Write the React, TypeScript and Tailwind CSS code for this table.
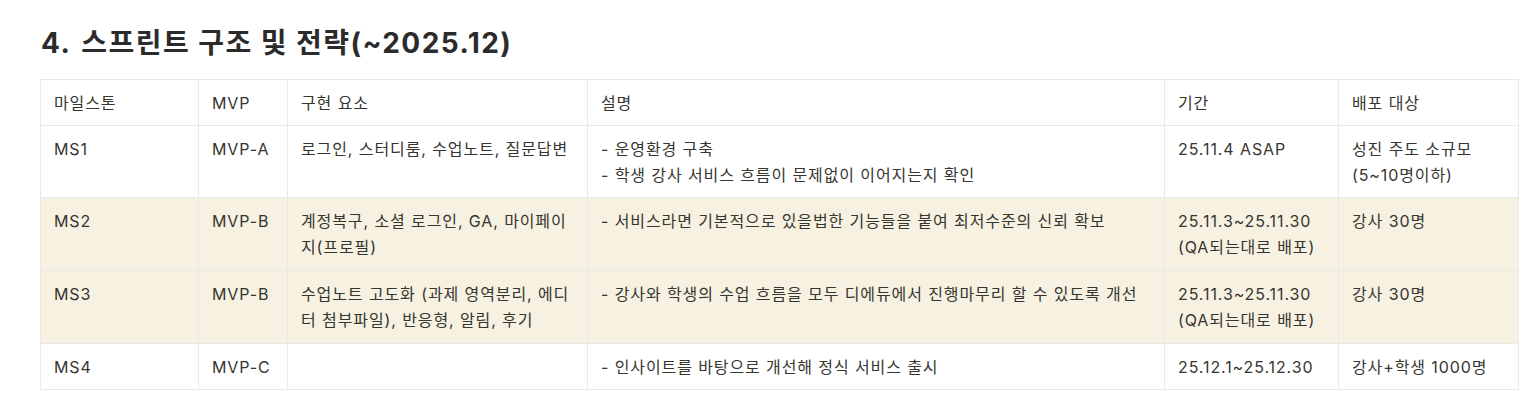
const ROWS = [
  {
    ms: "MS1",
    mvp: "MVP-A",
    items: "로그인, 스터디룸, 수업노트, 질문답변",
    desc: ["- 운영환경 구축", "- 학생 강사 서비스 흐름이 문제없이 이어지는지 확인"],
    period: ["25.11.4 ASAP"],
    target: ["성진 주도 소규모", "(5~10명이하)"],
    tint: false,
  },
  {
    ms: "MS2",
    mvp: "MVP-B",
    items: "계정복구, 소셜 로그인, GA, 마이페이지(프로필)",
    desc: ["- 서비스라면 기본적으로 있을법한 기능들을 붙여 최저수준의 신뢰 확보"],
    period: ["25.11.3~25.11.30", "(QA되는대로 배포)"],
    target: ["강사 30명"],
    tint: true,
  },
  {
    ms: "MS3",
    mvp: "MVP-B",
    items: "수업노트 고도화 (과제 영역분리, 에디터 첨부파일), 반응형, 알림, 후기",
    desc: ["- 강사와 학생의 수업 흐름을 모두 디에듀에서 진행마무리 할 수 있도록 개선"],
    period: ["25.11.3~25.11.30", "(QA되는대로 배포)"],
    target: ["강사 30명"],
    tint: true,
  },
  {
    ms: "MS4",
    mvp: "MVP-C",
    items: "",
    desc: ["- 인사이트를 바탕으로 개선해 정식 서비스 출시"],
    period: ["25.12.1~25.12.30"],
    target: ["강사+학생 1000명"],
    tint: false,
  },
];

const HEADERS = ["마일스톤", "MVP", "구현 요소", "설명", "기간", "배포 대상"];
const WIDTHS = ["w-[158px]", "w-[89px]", "w-[300px]", "w-[577px]", "w-[174px]", "w-[180px]"];

function Lines({ lines }: { lines: string[] }) {
  return (
    <>
      {lines.map((l) => (
        <div key={l}>{l}</div>
      ))}
    </>
  );
}

export default function App() {
  const base = "border border-[#e9e9e7] px-[13px] pt-[10px] align-top";

  return (
    <div
      className="min-h-[412px] bg-white pl-[40px] pt-[24px] text-[#37352f]"
      style={{ fontFamily: 'Inter, "Noto Sans CJK KR", sans-serif' }}
    >
      {/* title */}
      <h2 className="pl-[1px] text-[28px] font-bold leading-[38px] tracking-[1.45px] text-[#2b2b2b]">
        4.<span className="ml-[10px]">스프린트 구조 및 전략(~2025.12)</span>
      </h2>

      {/* table */}
      <table className="mt-[17px] table-fixed border-collapse text-[16px] leading-[26px] tracking-[0.9px]">
        <colgroup>
          {WIDTHS.map((w) => (
            <col key={w} className={w} />
          ))}
        </colgroup>
        <thead>
          <tr>
            {HEADERS.map((h) => (
              <th key={h} className={`${base} pb-[9px] text-left font-normal`}>
                {h}
              </th>
            ))}
          </tr>
        </thead>
        <tbody>
          {ROWS.map((r) => {
            const cell = `${base} ${r.tint ? "pb-[10px]" : "pb-[9px]"}`;
            return (
              <tr key={r.ms} className={r.tint ? "bg-[#f6f1e0]" : ""}>
                <td className={cell}>{r.ms}</td>
                <td className={cell}>{r.mvp}</td>
                <td className={cell}>{r.items}</td>
                <td className={cell}>
                  <Lines lines={r.desc} />
                </td>
                <td className={cell}>
                  <Lines lines={r.period} />
                </td>
                <td className={cell}>
                  <Lines lines={r.target} />
                </td>
              </tr>
            );
          })}
        </tbody>
      </table>
    </div>
  );
}
